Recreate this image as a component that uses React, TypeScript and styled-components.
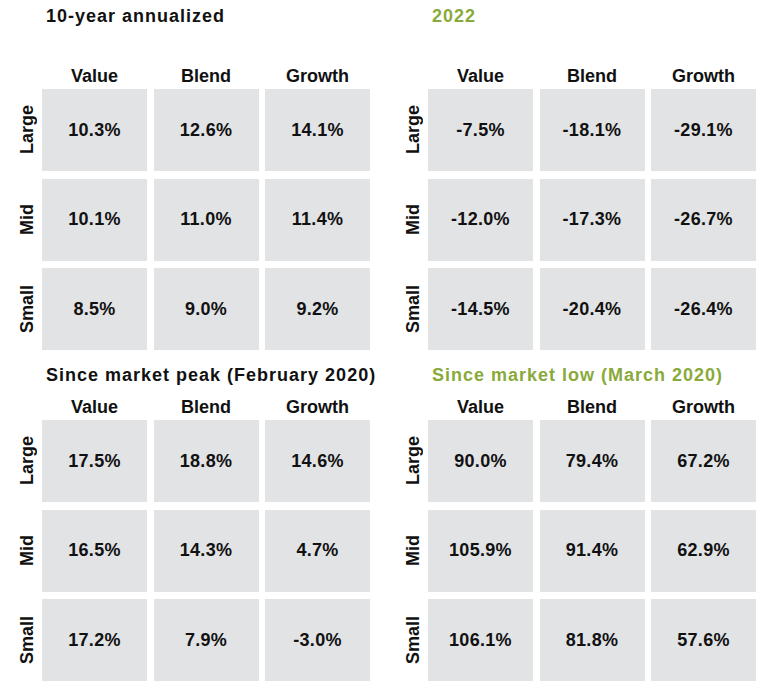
import styled, { createGlobalStyle, css } from 'styled-components'

const GlobalStyle = createGlobalStyle`
  html, body {
    margin: 0;
    padding: 0;
    background: #ffffff;
  }
  body {
    font-family: 'Liberation Sans', Arial, sans-serif;
    color: #111111;
  }
`

const green = '#89aa3b'

const Page = styled.div`
  width: 764px;
  height: 693px;
  box-sizing: border-box;
  padding: 6px 0 0 18px;
  display: grid;
  grid-template-columns: 345.5px 345.5px;
  column-gap: 40.5px;
  row-gap: 15px;
  align-content: start;
`

const Panel = styled.section`
  display: flex;
  flex-direction: column;
`

const Title = styled.h2<{ $accent?: boolean; $gap: number }>`
  margin: 0 0 ${(p) => p.$gap}px 0;
  padding-left: 28px;
  font-size: 18px;
  line-height: 21px;
  font-weight: 700;
  letter-spacing: 1px;
  white-space: nowrap;
  color: ${(p) => (p.$accent ? green : '#111111')};
`

const columns = css`
  display: grid;
  grid-template-columns: 17.5px repeat(3, 105px);
  column-gap: 6.5px;
`

const HeaderRow = styled.div`
  ${columns};
  margin-bottom: 2px;
`

const ColHead = styled.div`
  text-align: center;
  font-size: 18px;
  line-height: 21px;
  font-weight: 700;
`

const Body = styled.div`
  ${columns};
  grid-auto-rows: 82px;
  row-gap: 7.5px;
`

const RowLabel = styled.div`
  display: flex;
  align-items: center;
  justify-content: flex-start;
  font-size: 18px;
  line-height: 18px;
  font-weight: 700;

  span {
    writing-mode: vertical-rl;
    transform: rotate(180deg);
  }
`

const Cell = styled.div`
  background: #e2e3e5;
  display: flex;
  align-items: center;
  justify-content: center;
  font-size: 18px;
  font-weight: 700;
  letter-spacing: 0.3px;
`

type Matrix = {
  title: string
  accent?: boolean
  values: string[][]
}

const styles = ['Value', 'Blend', 'Growth']
const sizes = ['Large', 'Mid', 'Small']

const panels: Matrix[] = [
  {
    title: '10-year annualized',
    values: [
      ['10.3%', '12.6%', '14.1%'],
      ['10.1%', '11.0%', '11.4%'],
      ['8.5%', '9.0%', '9.2%'],
    ],
  },
  {
    title: '2022',
    accent: true,
    values: [
      ['-7.5%', '-18.1%', '-29.1%'],
      ['-12.0%', '-17.3%', '-26.7%'],
      ['-14.5%', '-20.4%', '-26.4%'],
    ],
  },
  {
    title: 'Since market peak (February 2020)',
    values: [
      ['17.5%', '18.8%', '14.6%'],
      ['16.5%', '14.3%', '4.7%'],
      ['17.2%', '7.9%', '-3.0%'],
    ],
  },
  {
    title: 'Since market low (March 2020)',
    accent: true,
    values: [
      ['90.0%', '79.4%', '67.2%'],
      ['105.9%', '91.4%', '62.9%'],
      ['106.1%', '81.8%', '57.6%'],
    ],
  },
]

function StyleBox({ data, top }: { data: Matrix; top: boolean }) {
  return (
    <Panel>
      <Title $accent={data.accent} $gap={top ? 39 : 11}>
        {data.title}
      </Title>
      <HeaderRow>
        <div />
        {styles.map((s) => (
          <ColHead key={s}>{s}</ColHead>
        ))}
      </HeaderRow>
      <Body>
        {data.values.map((row, i) => [
          <RowLabel key={sizes[i]}>
            <span>{sizes[i]}</span>
          </RowLabel>,
          ...row.map((v, j) => <Cell key={sizes[i] + j}>{v}</Cell>),
        ])}
      </Body>
    </Panel>
  )
}

export default function App() {
  return (
    <>
      <GlobalStyle />
      <Page>
        {panels.map((p, i) => (
          <StyleBox key={p.title} data={p} top={i < 2} />
        ))}
      </Page>
    </>
  )
}
